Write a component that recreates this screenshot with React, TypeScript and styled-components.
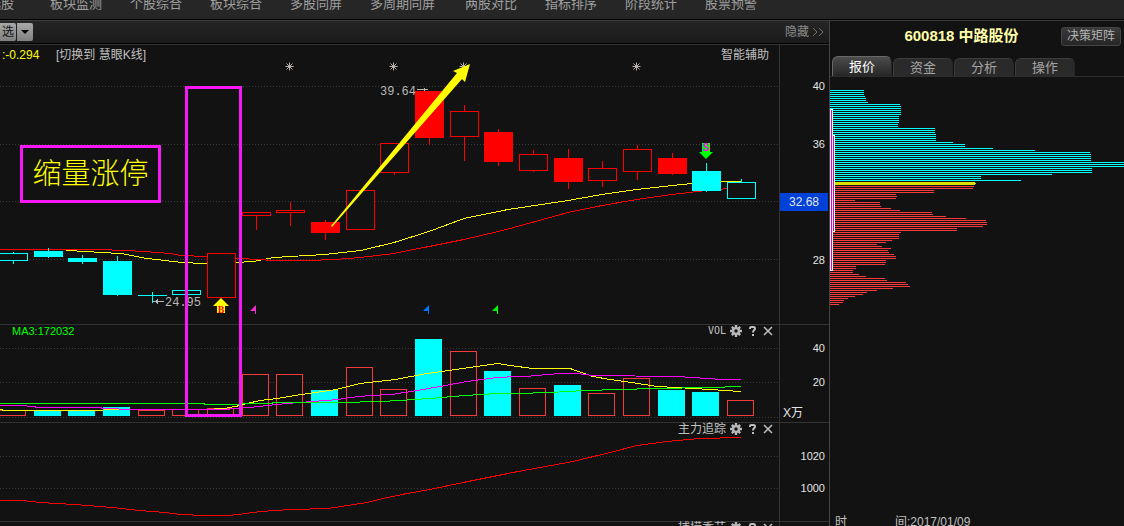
import React from "react";
import styled, { createGlobalStyle, css } from "styled-components";

const SANS = `"Liberation Sans", "Noto Sans CJK SC", sans-serif`;
const MONO = `"DejaVu Sans Mono", "Noto Sans CJK SC", monospace`;
const BG = "#121212";
const LINE = "#333333";
const CYAN = "#00ffff";
const RED = "#ff0000";
const SOFT_RED = "#f53b3b";
const YELLOW = "#ffff00";
const MAGENTA = "#ff00ff";
const MARK = "#f618f6";

const GlobalStyle = createGlobalStyle`
  * { box-sizing: border-box; }
  body {
    margin: 0;
    overflow: hidden;
    background: ${BG};
    color: #c0c0c0;
    font: 12px/12px ${SANS};
  }
  button {
    margin: 0;
    padding: 0;
    border: 0;
    background: none;
    color: inherit;
    font: inherit;
    white-space: nowrap;
    cursor: pointer;
  }
`;

const Page = styled.div`
  display: flex;
  flex-direction: column;
  height: 100vh;
  overflow: hidden;
`;

const Nav = styled.nav`
  display: flex;
  flex: none;
  margin-top: -6px;
  padding-bottom: 6px;
  background: #262626;
  border-bottom: 1px solid #000;
`;

const NavList = styled.div`
  display: flex;
  margin-left: -26px;
`;

const NavLink = styled.a<{ $width: number }>`
  flex: none;
  width: ${(p) => p.$width}px;
  padding-left: 14px;
  color: #a0a0a0;
  font-size: 13px;
  line-height: 19px;
  text-decoration: none;
  white-space: nowrap;
`;

const Body = styled.div`
  display: flex;
  flex: 1;
  min-height: 0;
  border-top: 1px solid #3c3c3c;
`;

const Main = styled.main`
  display: flex;
  flex: 1;
  flex-direction: column;
  min-width: 0;
`;

const Toolbar = styled.div`
  display: flex;
  flex: none;
  align-items: center;
  gap: 1px;
  height: 23px;
  padding-right: 5px;
  background: linear-gradient(#252525, #1a1a1a);
  border-bottom: 1px solid #000;
`;

const GreyButton = styled.button`
  display: flex;
  align-items: center;
  justify-content: center;
  width: 16px;
  height: 18px;
  border-radius: 0 2px 2px 0;
  background: linear-gradient(#a8a8a8, #808080);
  color: #111;
`;

const HideButton = styled.button`
  display: flex;
  align-items: center;
  gap: 3px;
  margin-left: auto;
  color: #8c8c8c;
`;

const Charts = styled.div`
  position: relative;
  flex: 1;
  min-height: 0;
  overflow: hidden;
  border-top: 1px solid ${LINE};
`;

const Panel = styled.section<{ $height: number }>`
  display: flex;
  height: ${(p) => p.$height}px;
  border-bottom: 1px solid ${LINE};
`;

const Plot = styled.div`
  position: relative;
  flex: 1;
  min-width: 0;
`;

const Canvas = styled.svg`
  display: block;
  width: 100%;
`;

const PlotHeader = styled.header<{ $tall?: boolean }>`
  position: absolute;
  inset: 0 0 auto 0;
  display: flex;
  align-items: center;
  gap: 4px;
  height: ${(p) => (p.$tall ? 20 : 12)}px;
  padding: 0 ${(p) => (p.$tall ? 10 : 5)}px 0 2px;
`;

const Reading = styled.span`
  width: 50px;
  color: ${YELLOW};
`;

const Average = styled.span`
  padding-left: 10px;
  color: #00ff00;
  font-size: 11px;
`;

const PlotTitle = styled.span<{ $mono?: boolean }>`
  margin-left: auto;
  white-space: nowrap;
  ${(p) =>
    p.$mono &&
    css`
      font: 10px/12px ${MONO};
    `}
`;

const IconButton = styled.button`
  display: flex;
  align-items: center;
  justify-content: center;
  width: 12px;
  height: 12px;
`;

const Axis = styled.div<{ $top: number }>`
  display: flex;
  flex: none;
  flex-direction: column;
  width: 50px;
  padding-top: ${(p) => p.$top}px;
  border-left: 1px solid ${LINE};
  color: #e4e4e4;
  font-size: 11px;
`;

const Tick = styled.div<{ $height: number }>`
  display: flex;
  align-items: center;
  justify-content: flex-end;
  height: ${(p) => p.$height}px;
  padding-right: 4px;
`;

const PriceTick = styled(Tick)`
  padding: 0 1px 0 0;
`;

const LastPrice = styled.span`
  flex: 1;
  background: #0042d8;
  font-size: 12px;
  line-height: 18px;
  text-align: center;
`;

const Unit = styled.span`
  margin-top: auto;
  padding-left: 3px;
  font-size: 12px;
  line-height: 18px;
`;

const RangeMark = styled.div`
  position: absolute;
  top: 41px;
  right: 587px;
  width: 57px;
  height: 331px;
  border: 3px solid ${MARK};
`;

const NoteMark = styled.div`
  position: absolute;
  top: 100px;
  right: 668px;
  width: 141px;
  border: 3px solid ${MARK};
  color: ${YELLOW};
  font-size: 29px;
  font-weight: 300;
  line-height: 52px;
  text-align: center;
  white-space: nowrap;
`;

const ArrowMark = styled.svg`
  position: absolute;
  top: 15px;
  right: 355px;
`;

const Sidebar = styled.aside`
  display: flex;
  flex: none;
  flex-direction: column;
  width: 295px;
  overflow: hidden;
  border-left: 1px solid #444;
`;

const StockHeader = styled.div`
  display: flex;
  flex: none;
  align-items: center;
  height: 30px;
  margin-bottom: 5px;
  padding: 0 3px 0 32px;
`;

const StockTitle = styled.h1`
  flex: 1;
  margin: 0;
  color: #ffffa8;
  font-size: 15px;
  line-height: 20px;
  text-align: center;
  white-space: nowrap;
`;

const MatrixButton = styled.button`
  width: 60px;
  height: 19px;
  border: 1px solid #444;
  border-radius: 3px;
  background: linear-gradient(#3a3a3a, #262626);
  color: #b4b4b4;
`;

const Tabs = styled.div`
  display: flex;
  flex: none;
  align-items: flex-end;
  gap: 1px;
  padding-left: 2px;
  border-bottom: 1px solid #2c2c2c;
`;

const Tab = styled.button<{ $active?: boolean }>`
  width: 60px;
  height: ${(p) => (p.$active ? 20 : 18)}px;
  border: 1px solid ${(p) => (p.$active ? "#686868" : "#3c3c3c")};
  border-bottom: 0;
  border-right-color: #262626;
  border-radius: 6px 6px 0 0;
  background: ${(p) => (p.$active ? "linear-gradient(#4c4c4c, #262626)" : "#2a2a2a")};
  color: ${(p) => (p.$active ? "#ffffff" : "#a4a4a4")};
  font-size: 13px;
  line-height: 16px;
`;

const Profile = styled.div`
  flex: 1;
  min-height: 0;
  overflow: hidden;
`;

const TimeRow = styled.div`
  display: flex;
  flex: none;
  height: 10px;
  padding-left: 5px;
`;

const TimeLabel = styled.span`
  display: flex;
  justify-content: space-between;
  width: 72px;
`;

type Shape = "solid" | "hollow";
// x, body top, body bottom, wick top, wick bottom
type Candle = [number, number, number, number, number, Shape, string];
const candles: Candle[] = [
  [-1, 208, 216, 207, 219, "hollow", CYAN],
  [34, 206, 212, 203, 213, "solid", CYAN],
  [68, 213, 217, 210, 219, "solid", CYAN],
  [103, 216, 250, 211, 251, "solid", CYAN],
  [138, 250, 251, 247, 258, "solid", CYAN],
  [172, 245, 250, 245, 250, "hollow", CYAN],
  [207, 208, 253, 208, 253, "hollow", RED],
  [242, 167, 171, 167, 185, "hollow", RED],
  [276, 165, 168, 157, 181, "hollow", RED],
  [311, 177, 188, 175, 195, "solid", RED],
  [346, 145, 185, 145, 185, "hollow", RED],
  [380, 98, 128, 98, 130, "hollow", RED],
  [415, 46, 93, 46, 100, "solid", RED],
  [450, 66, 92, 60, 116, "hollow", RED],
  [484, 87, 117, 84, 121, "solid", RED],
  [519, 109, 126, 105, 127, "hollow", RED],
  [554, 113, 137, 104, 144, "solid", RED],
  [588, 123, 136, 116, 142, "hollow", RED],
  [623, 104, 127, 100, 135, "hollow", RED],
  [658, 113, 129, 108, 130, "solid", RED],
  [692, 126, 146, 118, 147, "solid", CYAN],
  [727, 137, 154, 134, 154, "hollow", CYAN],
];

const volumes: [number, number, Shape][] = [
  [-1, 85, "hollow"], [34, 85, "solid"], [68, 85, "solid"], [103, 82, "solid"],
  [138, 85, "hollow"], [172, 84, "hollow"], [207, 83, "hollow"], [242, 49, "hollow"],
  [276, 49, "hollow"], [311, 65, "solid"], [346, 42, "hollow"], [380, 64, "hollow"],
  [415, 14, "solid"], [450, 26, "hollow"], [484, 46, "solid"], [519, 63, "hollow"],
  [554, 60, "solid"], [588, 68, "hollow"], [623, 53, "hollow"], [658, 65, "solid"],
  [692, 67, "solid"], [727, 75, "hollow"],
];

const priceFast =
  "66,205 88,206 100,207 121,208 147,213 165,215 182,217 204,218 236,217 253,216 274,212 290,211 325,209 361,205 394,197 429,186 464,173 508,164 568,155 602,149 637,144 672,140 692,138 706,136 741,136";
const priceSlow =
  "0,204 98,204 125,205 144,206 170,208 181,210 207,211 240,213 274,215 308,215 335,214 360,212 394,208 429,201 464,194 498,186 510,183 568,167 602,160 637,154 672,149 706,145 741,142";
const volFast =
  "0,84 5,85 204,84 225,83 240,80 247,78 260,75 277,73 295,70 323,66 336,64 360,58 395,54 427,48 463,43 498,38 510,40 533,43 570,43 593,51 610,54 632,57 657,61 677,62 710,64 741,66";
const volMid =
  "0,80 22,80 40,82 100,82 103,83 135,84 225,84 235,83 250,82 267,80 287,78 313,76 338,74 350,72 370,70 392,69 417,65 440,61 467,56 497,52 518,51 525,51 560,48 577,48 593,50 677,51 707,53 723,54 741,54";
const volSlow =
  "0,78 204,78 205,79 238,79 240,78 270,78 275,77 340,77 380,76 400,75 430,73 465,70 497,68 517,68 550,67 585,65 620,64 655,63 710,62 741,61";
const force =
  "0,77 22,77 40,79 57,80 74,81 88,82 100,83 122,85 139,87 165,89 181,91 204,92 227,92 239,91 252,89 273,87 293,86 328,85 367,79 383,75 407,70 430,66 463,59 483,55 518,48 540,44 573,38 610,29 637,22 667,18 700,15 741,14";

const upperProfile = [
  34, 34, 34, 35, 36, 36, 38, 70, 71, 71, 71, 71, 71, 69, 69, 69, 69, 68, 68, 105, 105, 105, 106, 106,
  106, 106, 123, 135, 135, 163, 205, 260, 261, 261, 261, 261, 294, 294, 294, 262, 262, 262, 222, 151,
  151, 191,
];
const lowerProfile = [
  144, 143, 104, 104, 66, 67, 66, 25, 50, 50, 51, 61, 70, 102, 103, 116, 136, 156, 157, 157, 153, 127,
  127, 71, 69, 69, 69, 62, 56, 47, 52, 61, 58, 59, 64, 66, 66, 56, 56, 55, 26, 26, 23, 23, 29, 36, 55,
  57, 76, 78, 80, 63, 47, 37, 33, 25, 18, 14, 13, 9,
];

const profilePath = (widths: number[], top: number) =>
  widths.map((w, i) => `M0 ${top + i * 2}h${w}v1h-${w}z`).join("");

const navItems: [string, number][] = [
  ["选股", 62], ["板块监测", 80], ["个股综合", 80], ["板块综合", 80], ["多股同屏", 80],
  ["多周期同屏", 95], ["两股对比", 80], ["指标排序", 80], ["阶段统计", 80], ["股票预警", 80],
];

function Grid({ rows }: { rows: number[] }) {
  return (
    <g stroke="#3a3a3a" strokeDasharray="1 2" shapeRendering="crispEdges">
      {rows.map((y) => (
        <line key={y} x1="0" x2="779" y1={y + 0.5} y2={y + 0.5} />
      ))}
    </g>
  );
}

function Curve({ points, color }: { points: string; color: string }) {
  return (
    <polyline
      points={points}
      fill="none"
      stroke={color}
      shapeRendering="crispEdges"
      transform="translate(0 0.5)"
    />
  );
}

function Bar(p: { x: number; top: number; bottom: number; width: number; shape: Shape; color: string }) {
  return (
    <rect
      x={p.x + 0.5}
      y={p.top + 0.5}
      width={p.width - 1}
      height={p.bottom - p.top - 1}
      fill={p.shape === "solid" ? p.color : BG}
      stroke={p.color}
      shapeRendering="crispEdges"
    />
  );
}

function Star({ x }: { x: number }) {
  return (
    <path
      d={`M${x} 17V25M${x - 4} 21H${x + 4}M${x - 3} 18L${x + 3} 24M${x + 3} 18L${x - 3} 24`}
      stroke="#b8b0a8"
      transform="translate(0.5 0.5)"
    />
  );
}

function Flag({ x, color }: { x: number; color: string }) {
  return <path d={`M${x} 266L${x + 6} 260V269H${x + 5}V266Z`} fill={color} />;
}

function PriceChart() {
  return (
    <Canvas viewBox="0 0 779 279" height="279" preserveAspectRatio="xMaxYMin meet">
      <Grid rows={[41, 99, 156, 214]} />
      <Curve points={priceFast} color={YELLOW} />
      <Curve points={priceSlow} color={RED} />
      {candles.map(([x, top, bottom, high, low, shape, color]) => (
        <g key={x}>
          <rect x={x + 14} y={high} width="1" height={low - high} fill={color} />
          {bottom - top === 1 ? (
            <rect x={x} y={top} width="29" height="1" fill={color} />
          ) : (
            <Bar x={x} top={top} bottom={bottom} width={29} shape={shape} color={color} />
          )}
        </g>
      ))}
      {[289, 393, 463, 636].map((x) => (
        <Star key={x} x={x} />
      ))}
      <g fill="#b8b8b8" fontFamily="Liberation Mono, monospace" fontSize="12">
        <text x="380" y="50">39.64</text>
        <text x="165" y="261">24.95</text>
      </g>
      <g stroke="#b8b8b8" fill="none" shapeRendering="crispEdges">
        <path d="M417 44.5H428M424.5 43V46M153 256.5H164M156.5 255V258M157.5 254V259" />
      </g>
      <path d="M221 253L229 261H225V268H217V261H213Z" fill={YELLOW} />
      <text x="221" y="268" fill={RED} fontFamily="Liberation Serif, serif" fontSize="10" fontWeight="700" textAnchor="middle">
        B
      </text>
      <path d="M702 98H710V107H713L706 114L699 107H702Z" fill="#00ff00" />
      <text x="706" y="106" fill={MAGENTA} fontFamily="Liberation Sans, sans-serif" fontSize="10" fontWeight="700" textAnchor="middle">
        S
      </text>
      <Flag x={250} color="#f030d0" />
      <Flag x={423} color="#0078ff" />
      <Flag x={492} color="#00ff00" />
    </Canvas>
  );
}

function VolumeChart() {
  return (
    <Canvas viewBox="0 0 779 97" height="97" preserveAspectRatio="xMaxYMin meet">
      <Grid rows={[23, 57, 92]} />
      {volumes.map(([x, top, shape]) => (
        <Bar key={x} x={x} top={top} bottom={91} width={27} shape={shape} color={shape === "solid" ? CYAN : SOFT_RED} />
      ))}
      <Curve points={volFast} color={YELLOW} />
      <Curve points={volMid} color={MAGENTA} />
      <Curve points={volSlow} color="#00ff00" />
    </Canvas>
  );
}

function ProfileChart() {
  return (
    <svg width="294" height="240" viewBox="0 0 294 240" shapeRendering="crispEdges">
      <path d={profilePath(upperProfile, 13)} fill={CYAN} />
      <path d="M0 105H145V106H146V107H145V108H0Z" fill="#dede00" />
      <path d={profilePath(lowerProfile, 109)} fill={SOFT_RED} />
      <rect x="0" y="32" width="3" height="162" fill="#fff" />
      <rect x="1" y="33" width="1" height="160" fill="#d800d8" />
      <rect x="2" y="58" width="3" height="97" fill="#fff" />
      <rect x="3" y="59" width="1" height="95" fill="#d800d8" />
    </svg>
  );
}

function Controls() {
  return (
    <>
      <IconButton aria-label="设置">
        <svg width="12" height="12" viewBox="0 0 12 12">
          <g stroke="#b8b8b8" strokeWidth="2.4">
            <path d="M6 0V12M0 6H12M1.8 1.8L10.2 10.2M10.2 1.8L1.8 10.2" />
          </g>
          <circle cx="6" cy="6" r="4" fill="#b8b8b8" />
          <circle cx="6" cy="6" r="1.7" fill={BG} />
        </svg>
      </IconButton>
      <IconButton aria-label="帮助">
        <svg width="12" height="12" viewBox="0 0 12 12" fill="none" stroke="#c0c0c0" strokeWidth="2">
          <path d="M4 4V3Q4 2 5.5 2H7.5Q9 2 9 3.5Q9 4.5 8 5.2Q7 6 7 7.5M7 9V11" />
        </svg>
      </IconButton>
      <IconButton aria-label="关闭">
        <svg width="12" height="12" viewBox="0 0 12 12" stroke="#c0c0c0" strokeWidth="1.5">
          <path d="M2 2L10 10M10 2L2 10" />
        </svg>
      </IconButton>
    </>
  );
}

export default function App() {
  return (
    <Page>
      <GlobalStyle />
      <Nav>
        <NavList>
          {navItems.map(([label, width]) => (
            <NavLink key={label} href="#" $width={width}>
              {label}
            </NavLink>
          ))}
        </NavList>
      </Nav>
      <Body>
        <Main>
          <Toolbar>
            <GreyButton>选</GreyButton>
            <GreyButton aria-label="更多">
              <svg width="8" height="4" viewBox="0 0 8 4">
                <path d="M0 0H8L4 4Z" fill="#000" />
              </svg>
            </GreyButton>
            <HideButton>
              隐藏
              <svg width="12" height="10" viewBox="0 0 12 10" fill="none" stroke="#707070">
                <path d="M1 1L5 5L1 9M7 1L11 5L7 9" />
              </svg>
            </HideButton>
          </Toolbar>
          <Charts>
            <Panel $height={280}>
              <Plot>
                <PriceChart />
                <PlotHeader $tall>
                  <Reading>:-0.294</Reading>
                  <button>[切换到 慧眼K线]</button>
                  <PlotTitle>智能辅助</PlotTitle>
                </PlotHeader>
              </Plot>
              <Axis $top={12}>
                <Tick $height={58}>40</Tick>
                <Tick $height={58}>36</Tick>
                <PriceTick $height={58}>
                  <LastPrice>32.68</LastPrice>
                </PriceTick>
                <Tick $height={58}>28</Tick>
              </Axis>
            </Panel>
            <Panel $height={98}>
              <Plot>
                <VolumeChart />
                <PlotHeader>
                  <Average>MA3:172032</Average>
                  <PlotTitle $mono>VOL</PlotTitle>
                  <Controls />
                </PlotHeader>
              </Plot>
              <Axis $top={6}>
                <Tick $height={34}>40</Tick>
                <Tick $height={34}>20</Tick>
                <Unit>X万</Unit>
              </Axis>
            </Panel>
            <Panel $height={99}>
              <Plot>
                <Canvas viewBox="0 0 779 98" height="98" preserveAspectRatio="xMaxYMin meet">
                  <Grid rows={[33, 65]} />
                  <Curve points={force} color={RED} />
                </Canvas>
                <PlotHeader>
                  <PlotTitle>主力追踪</PlotTitle>
                  <Controls />
                </PlotHeader>
              </Plot>
              <Axis $top={17}>
                <Tick $height={32}>1020</Tick>
                <Tick $height={32}>1000</Tick>
              </Axis>
            </Panel>
            <Panel $height={99}>
              <Plot>
                <PlotHeader>
                  <PlotTitle>捕捞季节</PlotTitle>
                  <Controls />
                </PlotHeader>
              </Plot>
              <Axis $top={17} />
            </Panel>
            <RangeMark />
            <NoteMark>缩量涨停</NoteMark>
            <ArrowMark width="146" height="170" viewBox="0 0 146 170">
              <path d="M3 166L129 13L125 11L142 4L137 22L134 19L4 167Z" fill={YELLOW} />
            </ArrowMark>
          </Charts>
        </Main>
        <Sidebar>
          <StockHeader>
            <StockTitle>600818 中路股份</StockTitle>
            <MatrixButton>决策矩阵</MatrixButton>
          </StockHeader>
          <Tabs role="tablist">
            <Tab role="tab" aria-selected="true" $active>报价</Tab>
            <Tab role="tab" aria-selected="false">资金</Tab>
            <Tab role="tab" aria-selected="false">分析</Tab>
            <Tab role="tab" aria-selected="false">操作</Tab>
          </Tabs>
          <Profile>
            <ProfileChart />
          </Profile>
          <TimeRow>
            <TimeLabel>
              <span>时</span>
              <span>间</span>
            </TimeLabel>
            <time dateTime="2017-01-09">:2017/01/09</time>
          </TimeRow>
        </Sidebar>
      </Body>
    </Page>
  );
}
